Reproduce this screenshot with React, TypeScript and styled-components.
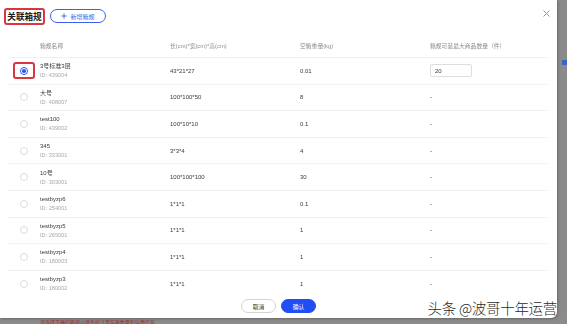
import React from 'react'
import styled, { createGlobalStyle } from 'styled-components'

const GlobalStyle = createGlobalStyle`
  html, body {
    margin: 0;
    padding: 0;
    background: #8b8b8b;
    overflow: hidden;
  }
  body {
    font-family: 'Liberation Sans', 'Noto Sans CJK SC', sans-serif;
    -webkit-font-smoothing: antialiased;
  }
`

type BoxRule = {
  name: string
  id: string
  size: string
  weight: string
  max?: string
  selected?: boolean
}

const rules: BoxRule[] = [
  { name: '3号标准3层', id: '439004', size: '43*21*27', weight: '0.01', max: '20', selected: true },
  { name: '大号', id: '408007', size: '100*100*50', weight: '8' },
  { name: 'test100', id: '439002', size: '100*10*10', weight: '0.1' },
  { name: '345', id: '333001', size: '3*3*4', weight: '4' },
  { name: '10号', id: '303001', size: '100*100*100', weight: '30' },
  { name: 'testbyzp6', id: '254001', size: '1*1*1', weight: '0.1' },
  { name: 'testbyzp5', id: '265001', size: '1*1*1', weight: '1' },
  { name: 'testbyzp4', id: '180003', size: '1*1*1', weight: '1' },
  { name: 'testbyzp3', id: '180002', size: '1*1*1', weight: '1' }
]

const Page = styled.div`
  position: relative;
  width: 567px;
  height: 324px;
  display: flex;
  flex-direction: column;
`

const Backdrop = styled.div`
  display: flex;
  flex: 1;
`

const Modal = styled.div`
  position: relative;
  width: 557px;
  height: 318px;
  background: #fff;
  border-radius: 0 0 6px 0;
  display: flex;
  flex-direction: column;
  box-shadow: 1px 1px 3px rgba(0, 0, 0, 0.25);
`

const SideStrip = styled.div`
  flex: 1;
  padding-top: 60px;
  padding-left: 5px;
`

const BlueMark = styled.div`
  width: 5px;
  height: 5px;
  background: #3c64c8;
`

const BottomStrip = styled.div`
  height: 6px;
  padding-left: 40px;
  overflow: hidden;
  font-size: 5px;
  line-height: 8px;
  color: #a02828;
`

const Header = styled.div`
  height: 34px;
  display: flex;
  align-items: center;
  padding: 0 7px 2px 4px;
  gap: 5px;
  box-sizing: border-box;
`

const Title = styled.div`
  width: 41px;
  height: 17px;
  box-sizing: border-box;
  display: flex;
  align-items: center;
  justify-content: center;
  font-family: 'Noto Sans CJK SC', sans-serif;
  font-size: 8.6px;
  font-weight: 700;
  color: #1a1a1a;
  border: 2px solid #d9363e;
  border-radius: 3px;
`

const AddButton = styled.button`
  height: 14px;
  width: 56px;
  border: 1px solid #3d5ff0;
  border-radius: 7px;
  background: #fff;
  color: #3d5ff0;
  font-size: 6px;
  padding: 0;
  display: flex;
  align-items: center;
  justify-content: center;
  gap: 3px;
  font-family: inherit;
`

const Close = styled.div`
  margin-left: auto;
  align-self: flex-start;
  margin-top: 10px;
  display: flex;
  color: #8a8a8a;
`

const TableArea = styled.div`
  flex: 1;
  overflow: hidden;
  padding: 0 10px 0 8px;
`

const Row = styled.div<{ $head?: boolean }>`
  display: grid;
  grid-template-columns: 32px 130px 130px 130px 1fr;
  align-items: center;
  height: ${(p) => (p.$head ? '24px' : '26.6px')};
  border-bottom: 1px solid #f0f0f0;
  box-sizing: border-box;
  font-size: ${(p) => (p.$head ? '5.8px' : '6px')};
  color: ${(p) => (p.$head ? '#8c8c8c' : '#3a3a3a')};
  & > *:not(:first-child) {
    filter: grayscale(1);
  }
`

const RadioCell = styled.div`
  display: flex;
  justify-content: center;
  align-items: center;
`

const Mark = styled.div<{ $on?: boolean }>`
  width: 22px;
  height: 17px;
  box-sizing: border-box;
  border: 2px solid ${(p) => (p.$on ? '#d9363e' : 'transparent')};
  border-radius: 3px;
  display: flex;
  align-items: center;
  justify-content: center;
`

const Radio = styled.div<{ $on?: boolean }>`
  width: 8px;
  height: 8px;
  box-sizing: border-box;
  border-radius: 50%;
  border: 1px solid ${(p) => (p.$on ? '#2f5bf5' : '#dcdcdc')};
  display: flex;
  align-items: center;
  justify-content: center;
  &::after {
    content: '';
    width: 3.5px;
    height: 3.5px;
    border-radius: 50%;
    background: ${(p) => (p.$on ? '#2f5bf5' : 'transparent')};
  }
`

const NameCell = styled.div`
  display: flex;
  flex-direction: column;
  gap: 1px;
  line-height: 8px;
`

const Id = styled.span`
  font-size: 5.6px;
  color: #a8a8a8;
`

const QtyInput = styled.div`
  width: 42px;
  height: 13px;
  box-sizing: border-box;
  border: 1px solid #dedede;
  border-radius: 2px;
  padding-left: 4px;
  display: flex;
  align-items: center;
  font-size: 6px;
`

const Footer = styled.div`
  height: 27px;
  display: flex;
  justify-content: center;
  align-items: center;
  gap: 5px;
  padding-top: 3px;
  box-sizing: border-box;
`

const FooterButton = styled.button<{ $primary?: boolean }>`
  width: 35px;
  height: 14px;
  border-radius: 7px;
  padding: 0;
  font-size: 5.8px;
  font-family: inherit;
  border: 1px solid ${(p) => (p.$primary ? '#1f4ef5' : '#d4d4d4')};
  background: ${(p) => (p.$primary ? '#1f4ef5' : '#fff')};
  color: ${(p) => (p.$primary ? '#fff' : '#333')};
`

const Watermark = styled.div`
  position: absolute;
  right: 0;
  bottom: 0;
  font-family: 'Noto Sans CJK SC', sans-serif;
  font-size: 14.5px;
  font-weight: 300;
  color: #2a2a2a;
  text-shadow: 0 0 2px #fff;
  white-space: nowrap;
  letter-spacing: -0.3px;
`

export default function App() {
  return (
    <Page>
      <GlobalStyle />
      <Backdrop>
        <Modal>
          <Header>
            <Title>关联箱规</Title>
            <AddButton>
              <svg width="6" height="6" viewBox="0 0 6 6">
                <path d="M3 0.3V5.7M0.3 3H5.7" stroke="currentColor" strokeWidth="0.9" />
              </svg>
              新增箱规
            </AddButton>
            <Close>
              <svg width="7" height="7" viewBox="0 0 7 7">
                <path d="M0.5 0.5L6.5 6.5M6.5 0.5L0.5 6.5" stroke="currentColor" strokeWidth="0.9" />
              </svg>
            </Close>
          </Header>
          <TableArea>
            <Row $head>
              <span />
              <span>箱规名称</span>
              <span>长(cm)*宽(cm)*高(cm)</span>
              <span>空箱重量(kg)</span>
              <span>箱规可装最大商品数量（件）</span>
            </Row>
            {rules.map((r) => (
              <Row key={r.id}>
                <RadioCell>
                  <Mark $on={r.selected}>
                    <Radio $on={r.selected} />
                  </Mark>
                </RadioCell>
                <NameCell>
                  <span>{r.name}</span>
                  <Id>ID: {r.id}</Id>
                </NameCell>
                <span>{r.size}</span>
                <span>{r.weight}</span>
                {r.max ? <QtyInput>{r.max}</QtyInput> : <span>-</span>}
              </Row>
            ))}
          </TableArea>
          <Footer>
            <FooterButton>取消</FooterButton>
            <FooterButton $primary>确认</FooterButton>
          </Footer>
          <Watermark>头条 @波哥十年运营</Watermark>
        </Modal>
        <SideStrip>
          <BlueMark />
        </SideStrip>
      </Backdrop>
      <BottomStrip>请选择正确的箱规以便系统计算装箱数量和运费信息</BottomStrip>
    </Page>
  )
}
